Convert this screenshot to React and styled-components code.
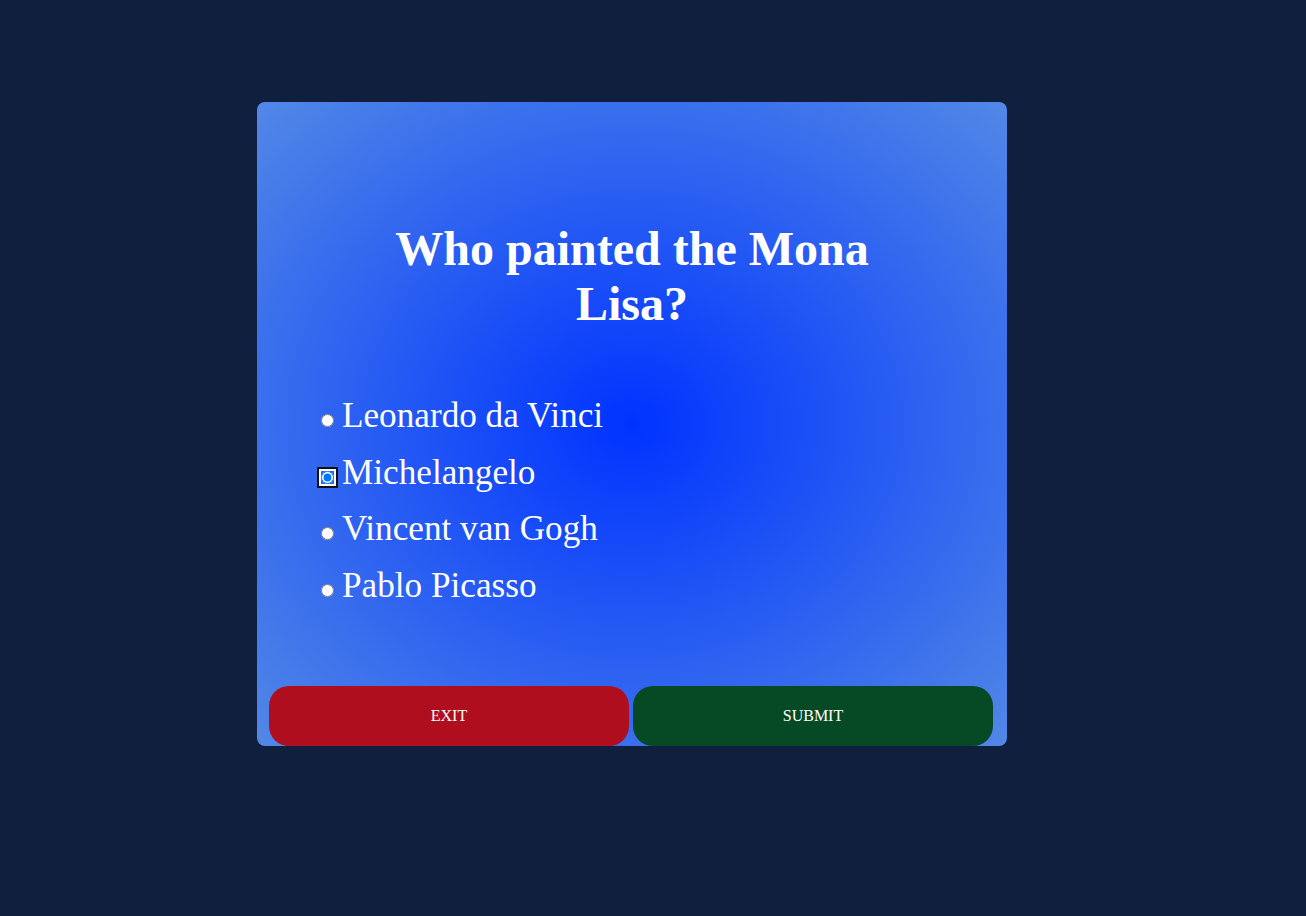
import React, { useState } from 'react'
import styled, { createGlobalStyle } from 'styled-components';

const options = ['Leonardo da Vinci', 'Michelangelo', 'Vincent van Gogh', 'Pablo Picasso'];

function App() {
    const [picked, setPicked] = useState('Michelangelo');
    return (
        <>
            <GlobalStyle />
            <Page>
                <Card>
                    <Question>Who painted the Mona Lisa?</Question>
                    <Options>
                        {options.map(opt =>
                            <Option key={opt}>
                                <Radio
                                    type="radio"
                                    name="answer"
                                    value={opt}
                                    checked={picked === opt}
                                    onChange={() => setPicked(opt)}
                                />
                                <span>{opt}</span>
                            </Option>
                        )}
                    </Options>
                    <Footer>
                        <Button tone="exit">EXIT</Button>
                        <Button tone="submit">SUBMIT</Button>
                    </Footer>
                </Card>
            </Page>
        </>
    )
}

export default App

const GlobalStyle = createGlobalStyle`
    html, body {
        margin: 0;
        padding: 0;
        background: #0f1f3d;
        font-family: "Liberation Serif", "Times New Roman", serif;
    }
`

const Page = styled.div`
    min-height: 916px;
    display: flex;
    padding: 102px 0 0 257px;
    box-sizing: border-box;
`

const Card = styled.div`
    width: 750px;
    height: 644px;
    border-radius: 8px;
    background: radial-gradient(#0033ff, #5288e6);
    display: flex;
    flex-direction: column;
    box-sizing: border-box;
    color: #fff;
`

const Question = styled.h1`
    width: 520px;
    margin: 119px auto 0;
    text-align: center;
    font-size: 48px;
    font-weight: 700;
    line-height: 55px;
`

const Options = styled.div`
    margin-top: 57px;
    padding-left: 59px;
    display: flex;
    flex-direction: column;
`

const Option = styled.label`
    display: flex;
    align-items: baseline;
    font-size: 35.2px;
    line-height: 40.5px;
    margin: 8px 0;
    cursor: pointer;
    span {
        margin-left: 5px;
    }
`

const Radio = styled.input`
    margin: 3px 3px 0 5px;
    &:checked {
        border-radius: 7px;
        box-shadow: 0 0 0 2px #fff;
        outline: 2px solid #101010;
        outline-offset: 2px;
    }
`

const Footer = styled.div`
    margin-top: auto;
    display: flex;
    gap: 4px;
    padding-left: 12px;
`

const Button = styled.button`
    width: 360px;
    height: 60px;
    border: none;
    border-radius: 20px;
    color: #fff;
    font-family: "Liberation Serif", "Times New Roman", serif;
    font-size: 16px;
    cursor: pointer;
    background: ${({ tone }) => tone === 'exit' ? '#ae0e1e' : '#064a25'};
`
